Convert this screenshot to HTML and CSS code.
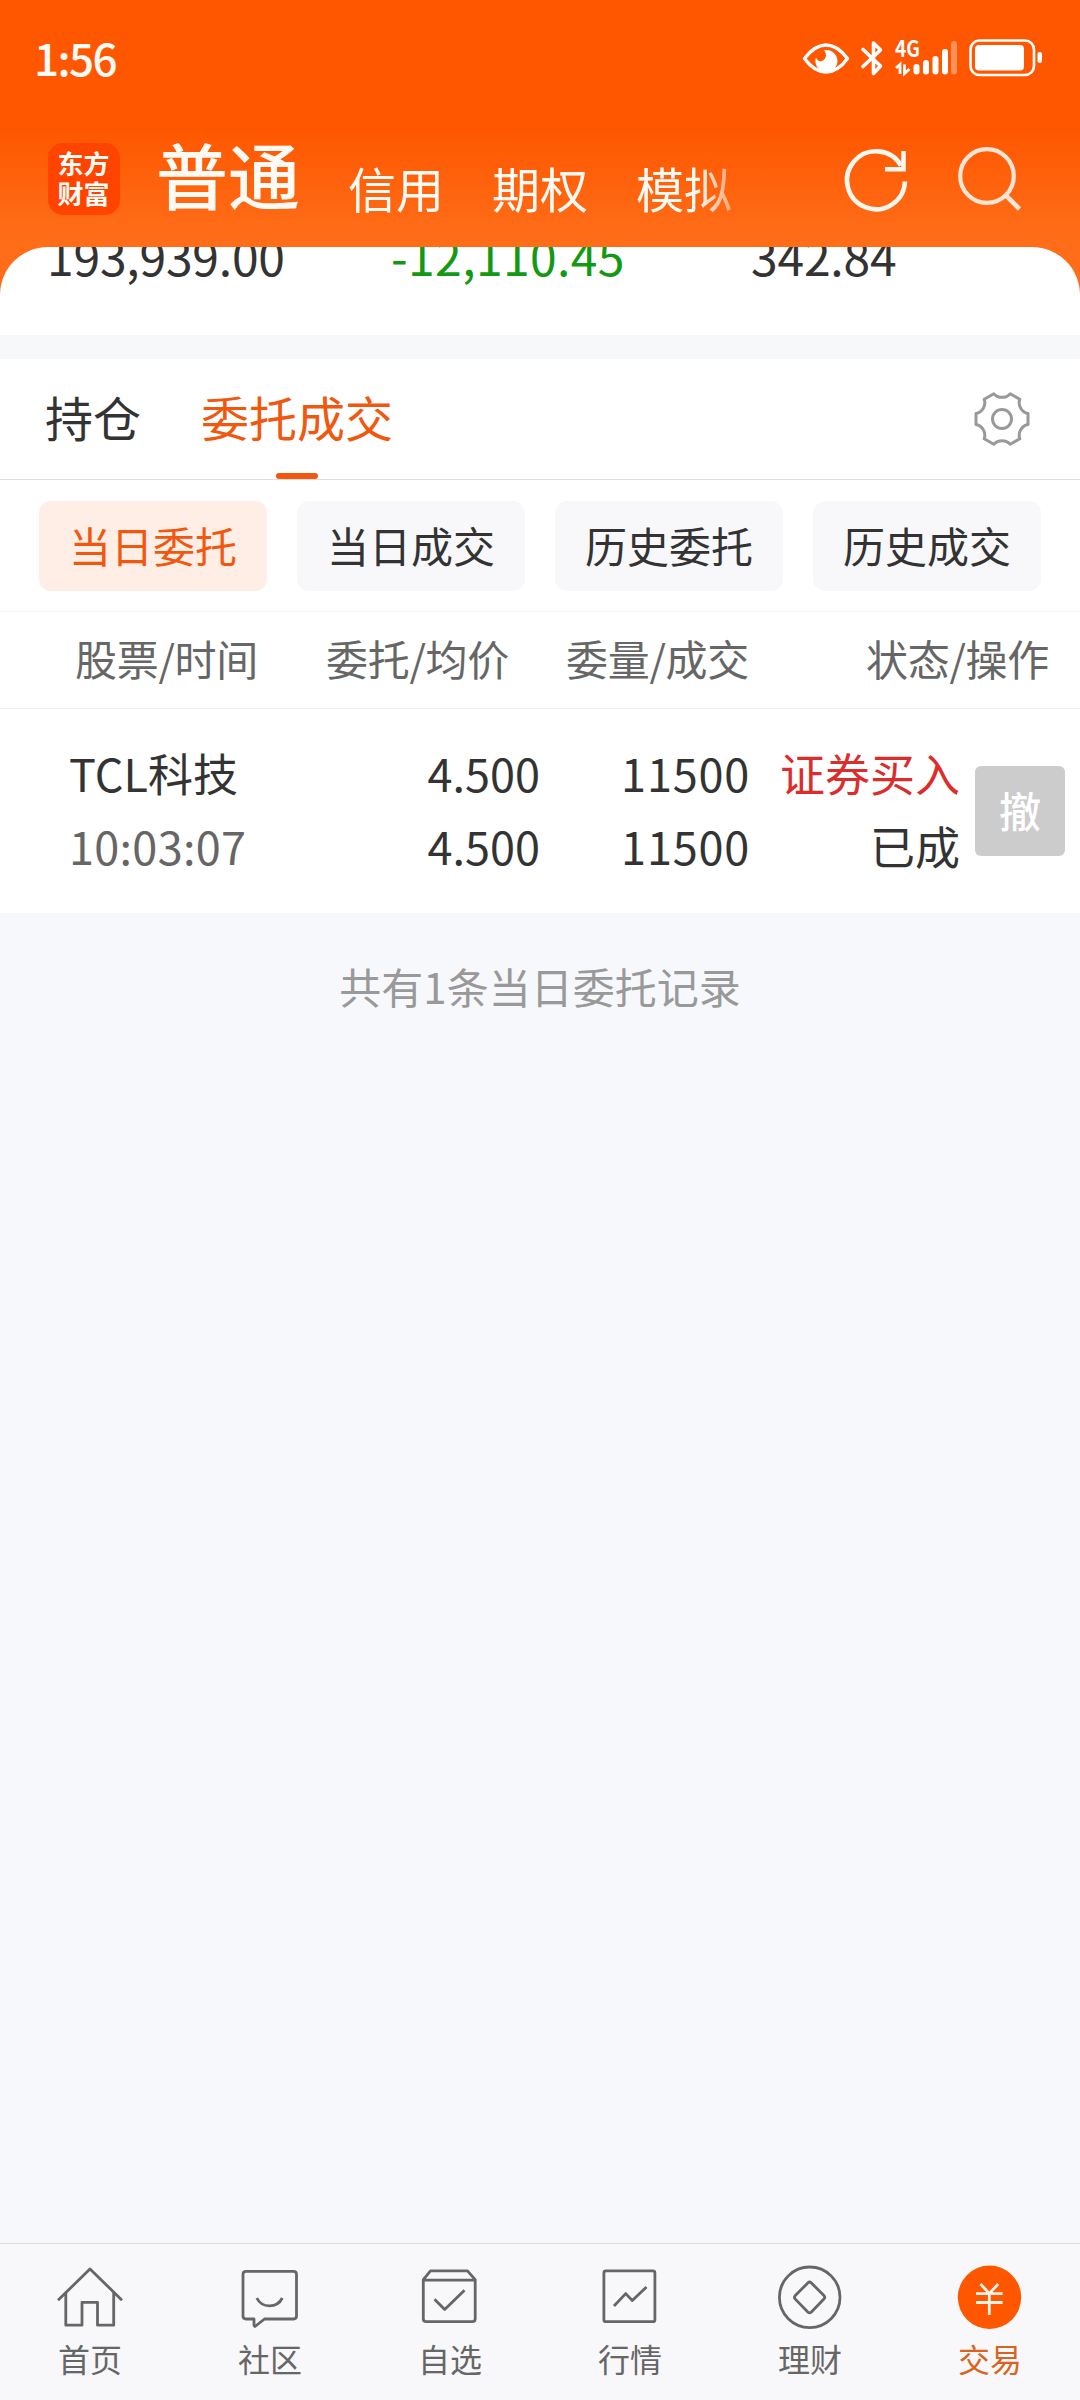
FILE: index.html
```html
<!DOCTYPE html>
<html lang="zh-CN">
<head>
  <meta charset="UTF-8">
  <title>委托成交</title>
  <link rel="stylesheet" href="styles.css">
</head>
<body>
  <header class="top">
    <div class="status-bar">
      <span class="clock">1:56</span>
      <div class="status-icons">
        <svg class="status-svg" width="242" height="40" viewBox="802 38 242 40">
          <!-- eye -->
          <path d="M804.500 58.500C811 50 818 45 826 45S841 50 847.500 58.500C841 67.500 834 72 826 72S811 67.500 804.500 58.500Z" fill="none" stroke="#fff" stroke-width="3.400" stroke-linejoin="round"/>
          <path d="M826 50a11 11 0 1 1-10 7.500c1 3 3.500 4.500 6 3.500c4-1.500 5.500-6.500 2-11z" fill="#fff"/>
          <!-- bluetooth -->
          <path d="M863 49.500L880.500 66L873.500 73.500V43L880.500 50L863 66.500" fill="none" stroke="#fff" stroke-width="3.600" stroke-linejoin="round" stroke-linecap="round"/>
          <!-- signal -->
          <text class="net" x="895" y="57" textLength="25" lengthAdjust="spacingAndGlyphs">4G</text>
          <path d="M896 68L900 64.500V74M904.500 64.500V73.500L909.500 69" fill="none" stroke="#fff" stroke-width="2.800"/>
          <g fill="#fff">
            <rect x="913.500" y="64" width="6" height="10.500" rx="3"/>
            <rect x="923" y="60" width="6" height="14.500" rx="3"/>
            <rect x="932.500" y="56" width="6" height="18.500" rx="3"/>
            <rect x="942" y="49" width="6" height="25.500" rx="3"/>
            <rect x="951" y="41" width="6" height="33.500" rx="3" opacity=".35"/>
            <!-- battery -->
            <rect x="975" y="45" width="49" height="25.500" rx="4"/>
            <rect x="1037.500" y="52" width="4.500" height="11" rx="2"/>
          </g>
          <rect x="970.500" y="40.500" width="63.500" height="34.500" rx="9" fill="none" stroke="#fff" stroke-width="2.600"/>
        </svg>
      </div>
    </div>
    <div class="title-bar">
      <div class="logo">东方<br>财富</div>
      <nav class="accounts">
        <span class="account active">普通</span>
        <span class="account">信用</span>
        <span class="account">期权</span>
        <span class="account">模拟</span>
      </nav>
      <svg class="refresh" width="72" height="72" viewBox="0 0 72 72">
        <path d="M65 37.500A29 29 0 1 1 61 21.500" fill="none" stroke="#fff6ee" stroke-width="4.600"/>
        <path d="M63.500 7V25.200H45" fill="none" stroke="#fff6ee" stroke-width="4.600"/>
      </svg>
      <svg class="search" width="72" height="72" viewBox="0 0 72 72">
        <circle cx="33" cy="32" r="26.800" fill="none" stroke="#ffe5d5" stroke-width="4.200"/>
        <path d="M52 51.500L65.500 65" fill="none" stroke="#ffe5d5" stroke-width="4.600"/>
      </svg>
    </div>
  </header>

  <section class="summary">
    <span class="sum">193,939.00</span>
    <span class="sum loss">-12,110.45</span>
    <span class="sum">342.84</span>
  </section>

  <section class="panel">
    <div class="tabs">
      <span class="tab">持仓</span>
      <span class="tab active">委托成交</span>
      <svg class="gear" width="60" height="60" viewBox="-30 -30 60 60">
        <path d="M26 -5.500L26 5.500A11 11 0 0 0 17.800 19.800L8.200 25.300A11 11 0 0 0 -8.200 25.300L-17.800 19.800A11 11 0 0 0 -26 5.500L-26 -5.500A11 11 0 0 0 -17.800 -19.800L-8.200 -25.300A11 11 0 0 0 8.200 -25.300L17.800 -19.800A11 11 0 0 0 26 -5.500Z"/>
        <circle r="9.500"/>
      </svg>
    </div>
    <div class="chips">
      <span class="chip active">当日委托</span>
      <span class="chip">当日成交</span>
      <span class="chip">历史委托</span>
      <span class="chip">历史成交</span>
    </div>
    <div class="table-head">
      <span>股票/时间</span>
      <span>委托/均价</span>
      <span>委量/成交</span>
      <span>状态/操作</span>
    </div>
    <div class="order">
      <div class="col name"><span>TCL科技</span><span class="time">10:03:07</span></div>
      <div class="col price"><span>4.500</span><span>4.500</span></div>
      <div class="col amount"><span>11500</span><span>11500</span></div>
      <div class="col state"><span class="buy">证券买入</span><span>已成</span></div>
      <button class="cancel">撤</button>
    </div>
  </section>

  <p class="count">共有1条当日委托记录</p>

  <nav class="bottom-nav">
    <div class="nav-item">
      <svg width="72" height="72" viewBox="0 0 72 72"><path d="M4 39.200L36 8L68 39.200M11.800 32V64.200H28V41.300H43.500V64.200H59.700V32"/></svg>
      <span>首页</span>
    </div>
    <div class="nav-item">
      <svg width="72" height="72" viewBox="0 0 72 72"><path d="M12 10.300H59.500Q62.500 10.300 62.500 13.300V55Q62.500 58 59.500 58H30.500L21 65.500L20 64.500V58H12Q9 58 9 55V13.300Q9 10.300 12 10.300Z"/><path d="M22.800 37C28 47.500 43 47.500 48.300 37"/></svg>
      <span>社区</span>
    </div>
    <div class="nav-item">
      <svg width="72" height="72" viewBox="0 0 72 72"><path d="M9.300 18.700L16.500 9.900H53.500L61.200 18.700V57.700Q61.200 60.700 58.200 60.700H12.300Q9.300 60.700 9.300 57.700ZM9.300 19.200H61.200"/><path d="M20.500 38.300L30.700 48.500L50.500 29.300"/></svg>
      <span>自选</span>
    </div>
    <div class="nav-item">
      <svg width="72" height="72" viewBox="0 0 72 72"><rect x="9.900" y="9.900" width="51" height="50.800" rx="2"/><path d="M20 45L31.700 32.600L38.300 39.500L52.500 26"/></svg>
      <span>行情</span>
    </div>
    <div class="nav-item">
      <svg width="72" height="72" viewBox="0 0 72 72"><circle cx="35.700" cy="36.300" r="30.300"/><path d="M33.800 22L21.300 34.500Q19.600 36.300 21.300 38.100L33.800 50.900Q35.600 52.600 37.400 50.900L49.900 38.100Q51.600 36.300 49.900 34.500L37.400 22Q35.600 20.200 33.800 22Z"/></svg>
      <span>理财</span>
    </div>
    <div class="nav-item active">
      <svg width="72" height="72" viewBox="0 0 72 72"><circle class="coin" cx="35.500" cy="36.300" r="31.700"/><path class="yen" d="M26.500 23L35.300 32.500L44.200 23M22 32.700H48.600M22 41.500H48.600M35.300 32.500V54"/></svg>
      <span>交易</span>
    </div>
  </nav>
</body>
</html>
```
FILE: styles.css
```css
* {
  box-sizing: border-box;
}
body {
  margin: 0;
  width: 1080px;
  height: 2400px;
  overflow: hidden;
  display: flex;
  flex-direction: column;
  background: linear-gradient(#ff5600 125px, #ff6d18 235px, #ff6d18 300px, #f7f8fb 300px);
  font-family: "Noto Sans CJK SC", "Noto Sans", sans-serif;
  color: #333;
}
.top {
  height: 247px;
  color: #fffaf4;
}
.status-bar {
  height: 116px;
  padding: 0 36px 0 34px;
  display: flex;
  justify-content: space-between;
}
.clock {
  font-size: 44px;
  font-weight: 500;
  line-height: 114px;
  letter-spacing: -1.6px;
}
.status-svg {
  display: block;
  margin-top: 38px;
}
.net {
  font-size: 22px;
  font-weight: 700;
  fill: #fff;
}
.title-bar {
  height: 131px;
  padding-left: 48px;
  display: flex;
  align-items: flex-start;
}
.logo {
  width: 72px;
  height: 72px;
  margin-top: 27px;
  padding: 5px 1px 0 0;
  border-radius: 15px;
  background: #ff4400;
  font-size: 26px;
  font-weight: 700;
  line-height: 30px;
  text-align: center;
}
.accounts {
  width: 640px;
  height: 120px;
  margin-left: 36px;
  display: flex;
  gap: 48px;
  -webkit-mask-image: linear-gradient(90deg, #000 540px, transparent 604px);
  mask-image: linear-gradient(90deg, #000 540px, transparent 604px);
}
.account {
  font-size: 48px;
  line-height: 142px;
}
.account.active {
  font-size: 72px;
  font-weight: 500;
  line-height: 114px;
}
.refresh {
  margin: 28px 0 0 44px;
}
.search {
  margin: 28px 0 0 42px;
}
.summary {
  height: 88px;
  padding-left: 47px;
  border-radius: 48px 48px 0 0;
  background: #fff;
  overflow: hidden;
  display: flex;
}
.sum {
  width: 344px;
  font-size: 48px;
  line-height: 16px;
  letter-spacing: -0.2px;
}
.sum:last-child {
  padding-left: 16px;
}
.loss {
  color: #149914;
  letter-spacing: 0.4px;
}
.panel {
  border-top: 24px solid #f7f8fa;
  background: #fff;
}
.tabs {
  height: 121px;
  padding: 0 48px 0 45px;
  border-bottom: 1px solid #ddd;
  display: flex;
  align-items: center;
  gap: 60px;
}
.tab {
  position: relative;
  height: 120px;
  font-size: 48px;
  line-height: 115px;
}
.tab.active {
  color: #f0580f;
}
.tab.active::after {
  content: "";
  position: absolute;
  left: 75px;
  bottom: 0;
  width: 42px;
  height: 6px;
  border-radius: 3px;
  background: #f0580f;
}
.gear {
  margin-left: auto;
  fill: none;
  stroke: #999;
  stroke-width: 3;
  stroke-linejoin: round;
}
.chips {
  height: 132px;
  padding: 21px 39px 0;
  border-bottom: 1px solid #f5f5f7;
  display: flex;
  gap: 30px;
}
.chip {
  width: 228px;
  height: 90px;
  border-radius: 12px;
  background: #f8f8fb;
  font-size: 42px;
  line-height: 87px;
  text-align: center;
}
.chip.active {
  background: #ffeee6;
  color: #f0580f;
}
.table-head {
  height: 97px;
  padding: 0 30px 0 75px;
  border-bottom: 1px solid #eee;
  display: grid;
  grid-template-columns: 251px 240px 300px 184px;
  font-size: 42px;
  line-height: 91px;
  letter-spacing: -0.3px;
  white-space: nowrap;
  color: #666;
}
.order {
  height: 204px;
  padding: 27px 15px 0 69px;
  display: flex;
  font-size: 45px;
  line-height: 73px;
}
.col {
  display: flex;
  flex-direction: column;
  text-align: right;
}
.name {
  width: 231px;
  text-align: left;
}
.price {
  width: 240px;
}
.amount {
  width: 210px;
  letter-spacing: 0.8px;
}
.state {
  width: 210px;
}
.time {
  color: #666;
  letter-spacing: 0.3px;
}
.buy {
  color: #dc2d2d;
}
.cancel {
  width: 90px;
  height: 90px;
  margin: 30px 0 0 15px;
  padding: 0 0 4px;
  border: none;
  border-radius: 6px;
  background: #ccc;
  color: #fff;
  font-family: inherit;
  font-size: 42px;
  font-weight: 500;
}
.count {
  margin: 0;
  flex: 1;
  padding-top: 43px;
  background: #f7f8fb;
  font-size: 42px;
  line-height: 60px;
  text-align: center;
  color: #999;
}
.bottom-nav {
  height: 157px;
  border-top: 1px solid #ddd;
  background: #f8f8fa;
  display: flex;
}
.nav-item {
  width: 180px;
  padding-top: 17px;
  display: flex;
  flex-direction: column;
  align-items: center;
  font-size: 32px;
  line-height: 50px;
  color: #666;
}
.nav-item svg {
  fill: none;
  stroke: #666;
  stroke-width: 2.8;
  stroke-linejoin: round;
}
.nav-item.active {
  color: #d96421;
}
.nav-item .coin {
  fill: #ff5600;
  stroke: none;
}
.nav-item .yen {
  stroke: #fff3e8;
}
```
